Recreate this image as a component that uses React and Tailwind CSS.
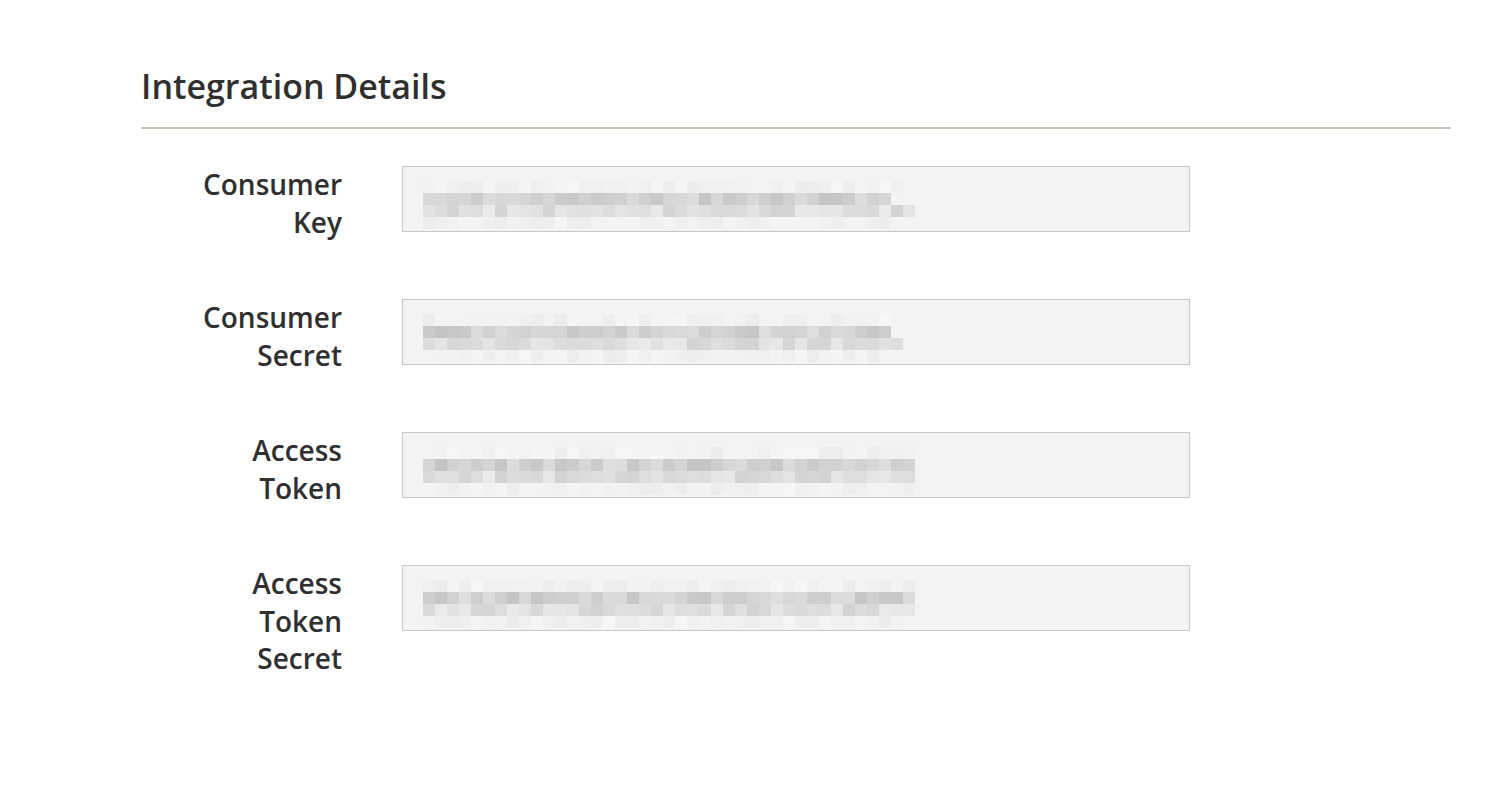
import React from "react";

const fields = [
  { label: ["Consumer", "Key"], seed: 11, cols: [40, 39, 41, 40] },
  { label: ["Consumer", "Secret"], seed: 23, cols: [39, 39, 40, 38] },
  { label: ["Access", "Token"], seed: 37, cols: [41, 41, 41, 41] },
  { label: ["Access", "Token", "Secret"], seed: 53, cols: [41, 41, 41, 40] },
];

// little pseudo random so the mosaic stays the same every render
const rand = (seed) => {
  let s = seed;
  return () => {
    s = (s * 9301 + 49297) % 233280;
    return s / 233280;
  };
};

// row shades: light top, dark middle, medium, very light bottom
const rowRange = [
  [236, 246],
  [196, 222],
  [210, 234],
  [236, 246],
];

const Mosaic = ({ seed, cols }) => {
  const r = rand(seed);
  return (
    <div className="flex flex-col">
      {cols.map((n, row) => (
        <div key={row} className="flex h-[12px]">
          {Array.from({ length: n }).map((_, i) => {
            const [lo, hi] = rowRange[row];
            const v = Math.round(lo + r() * (hi - lo));
            return (
              <div
                key={i}
                className="w-[12px] h-[12px]"
                style={{ backgroundColor: `rgb(${v},${v},${v})` }}
              />
            );
          })}
        </div>
      ))}
    </div>
  );
};

const Field = ({ label, seed, cols }) => (
  <div className="flex items-start">
    <label className="w-[261px] pr-[60px] pt-[1px] text-right text-[28px] leading-[37.5px] font-semibold text-[#303030]">
      {label.map((l) => (
        <div key={l}>{l}</div>
      ))}
    </label>
    <div className="mt-[1px] w-[788px] h-[66px] border border-[#c8c8c8] bg-[#f3f3f3] pl-[20px] pt-[14px]">
      <Mosaic seed={seed} cols={cols} />
    </div>
  </div>
);

export default function App() {
  return (
    <div
      className="min-h-[806px] bg-white pl-[141px] pr-[55px] pt-[62px]"
      style={{ fontFamily: '"Open Sans", "Noto Sans", sans-serif' }}
    >
      <h2 className="text-[34px] leading-[48px] font-semibold text-[#303030]">
        Integration Details
      </h2>
      <div className="mt-[17px] h-[2px] bg-[#cdc5b9]" />

      <div className="mt-[36px] flex flex-col gap-[57px]">
        {fields.map((f) => (
          <Field key={f.label.join(" ")} {...f} />
        ))}
      </div>
    </div>
  );
}
